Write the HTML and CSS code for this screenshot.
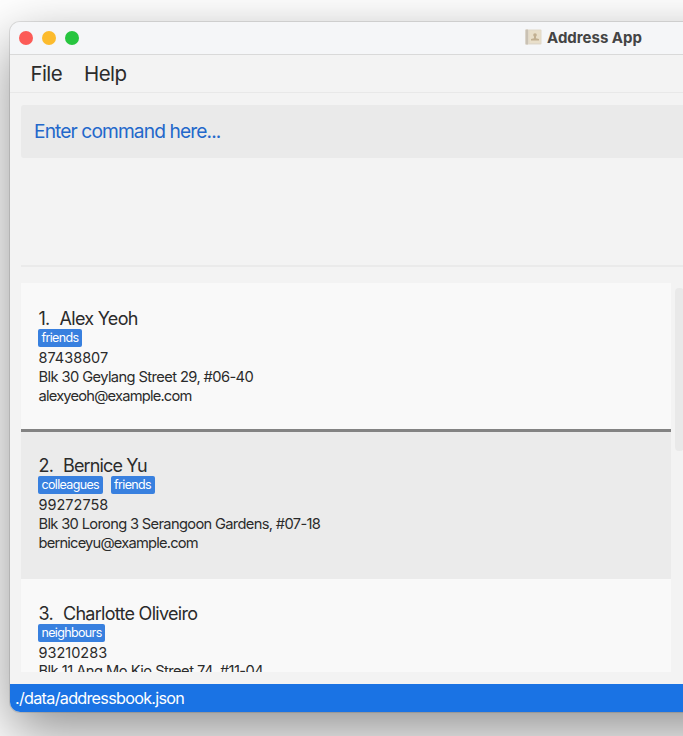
FILE: index.html
```html
<!DOCTYPE html>
<html lang="en">
<head>
<meta charset="utf-8">
<title>Address App</title>
<link rel="stylesheet" href="styles.css">
</head>
<body>
<div class="window">
  <header class="titlebar">
    <div class="lights"><i class="red"></i><i class="yellow"></i><i class="green"></i></div>
    <div class="title">
      <svg width="17" height="16" viewBox="0 0 17 16">
        <rect x=".5" y=".5" width="16" height="15" rx="1" fill="#e0d8c9"/>
        <rect x=".5" y=".5" width="2.500" height="15" fill="#c9c1b4"/>
        <rect x="4.500" y="1.500" width="11" height="12.500" fill="#e9dfca"/>
        <circle cx="10" cy="6" r="1.800" fill="#c2b092"/>
        <path d="M9 7h2v2.300l3 .7v1.400H6V10l3-.7z" fill="#c2b092"/>
      </svg>
      <span>Address App</span>
    </div>
  </header>
  <nav class="menu"><span>File</span><span>Help</span></nav>
  <main class="content">
    <div class="command"><span>Enter command here...</span></div>
    <div class="result"></div>
    <div class="list-pane">
      <div class="list">
        <article class="card">
          <h2><span>1.</span><span>Alex Yeoh</span></h2>
          <div class="tags"><span>friends</span></div>
          <p class="phone">87438807</p>
          <p>Blk 30 Geylang Street 29, #06-40</p>
          <p class="mail">alexyeoh@example.com</p>
        </article>
        <article class="card alt">
          <h2><span>2.</span><span>Bernice Yu</span></h2>
          <div class="tags"><span>colleagues</span><span>friends</span></div>
          <p class="phone">99272758</p>
          <p class="long">Blk 30 Lorong 3 Serangoon Gardens, #07-18</p>
          <p class="mail">berniceyu@example.com</p>
        </article>
        <article class="card">
          <h2><span>3.</span><span>Charlotte Oliveiro</span></h2>
          <div class="tags"><span>neighbours</span></div>
          <p class="phone">93210283</p>
          <p class="third">Blk 11 Ang Mo Kio Street 74, #11-04</p>
        </article>
      </div>
      <div class="thumb"></div>
    </div>
  </main>
  <footer class="status"><span>./data/addressbook.json</span></footer>
</div>
</body>
</html>
```
FILE: styles.css
```css
* { box-sizing: border-box; }
html, body { height: 100%; }
body {
  margin: 0;
  padding: 22px 0 0 10px;
  overflow: hidden;
  background: #fff;
  color: #2b2b2b;
  font-family: Inter, "Liberation Sans", sans-serif;
}
.window {
  width: 1147px;
  height: 690px;
  display: flex;
  flex-direction: column;
  border-radius: 10px;
  overflow: hidden;
  background: #f3f3f3;
  box-shadow: 0 0 0 1px rgba(0,0,0,.1), 0 20px 56px rgba(0,0,0,.44);
}
.titlebar {
  height: 33px;
  flex: none;
  display: grid;
  grid-template-columns: 1fr auto 1fr;
  align-items: center;
  background: #f5f6f8;
  border-bottom: 1px solid #d9d9d9;
}
.lights { display: flex; gap: 9px; padding-left: 9px; }
.lights i { width: 14px; height: 14px; border-radius: 50%; }
.red { background: #fc5b57; }
.yellow { background: #fcbb2d; }
.green { background: #27c53f; }
.title { display: flex; align-items: center; gap: 5px; margin-top: -2px; font-size: 15px; font-weight: 700; color: #444; }
.title svg { display: block; }
.menu {
  height: 38px;
  flex: none;
  display: flex;
  align-items: center;
  gap: 22px;
  padding-left: 20.500px;
  border-bottom: 1px solid #e8e8e8;
  font-size: 20.500px;
  letter-spacing: -.6px;
}
.content { flex: 1; min-height: 0; padding: 12px 11px; display: flex; flex-direction: column; }
.command {
  height: 53px;
  flex: none;
  display: flex;
  align-items: center;
  padding: 0 0 1px 13px;
  border-radius: 3px;
  background: #eaeaea;
  color: #2368cb;
  font-size: 19.200px;
  letter-spacing: -.9px;
}
.result { height: 109px; flex: none; border-bottom: 2px solid #eaeaea; }
.list-pane { flex: 1; min-height: 0; margin-top: 16px; display: flex; gap: 4px; }
.list { width: 650px; overflow: hidden; background: #f9f9f9; }
.card { height: 148.500px; padding: 25px 17px 0 17.500px; border-bottom: 3px solid #838383; }
.card.alt { height: 147px; padding-top: 23.500px; background: #ebebeb; border: 0; }
.alt + .card { padding-top: 24px; }
.card h2 { margin: 0; height: 21px; display: flex; gap: 10px; font-size: 18px; line-height: 21px; font-weight: 400; letter-spacing: -.72px; }
.alt h2 { letter-spacing: -.85px; }
.tags { height: 19px; display: flex; gap: 8px; margin-left: -.5px; }
.tags span {
  height: 18px;
  padding: 0 3.500px;
  border-radius: 2px;
  background: #3880df;
  color: #fff;
  font-size: 12.500px;
  line-height: 18px;
  letter-spacing: -.65px;
}
.card p { margin: 0; font-size: 14.700px; line-height: 19.600px; letter-spacing: -.6px; white-space: nowrap; }
.card p.long { letter-spacing: -.67px; }
.card p.mail { letter-spacing: -.8px; }
.card p.phone { letter-spacing: 0; font-size: 14.500px; }
.card p.third { letter-spacing: -.53px; }
.thumb { width: 9px; height: 163px; margin-top: 5px; border-radius: 4px; background: #e9e9e9; }
.status {
  height: 28px;
  flex: none;
  display: flex;
  align-items: center;
  padding-left: 5px;
  background: #1a73e4;
  color: #fff;
  font-size: 16.200px;
  letter-spacing: -.72px;
}
```
